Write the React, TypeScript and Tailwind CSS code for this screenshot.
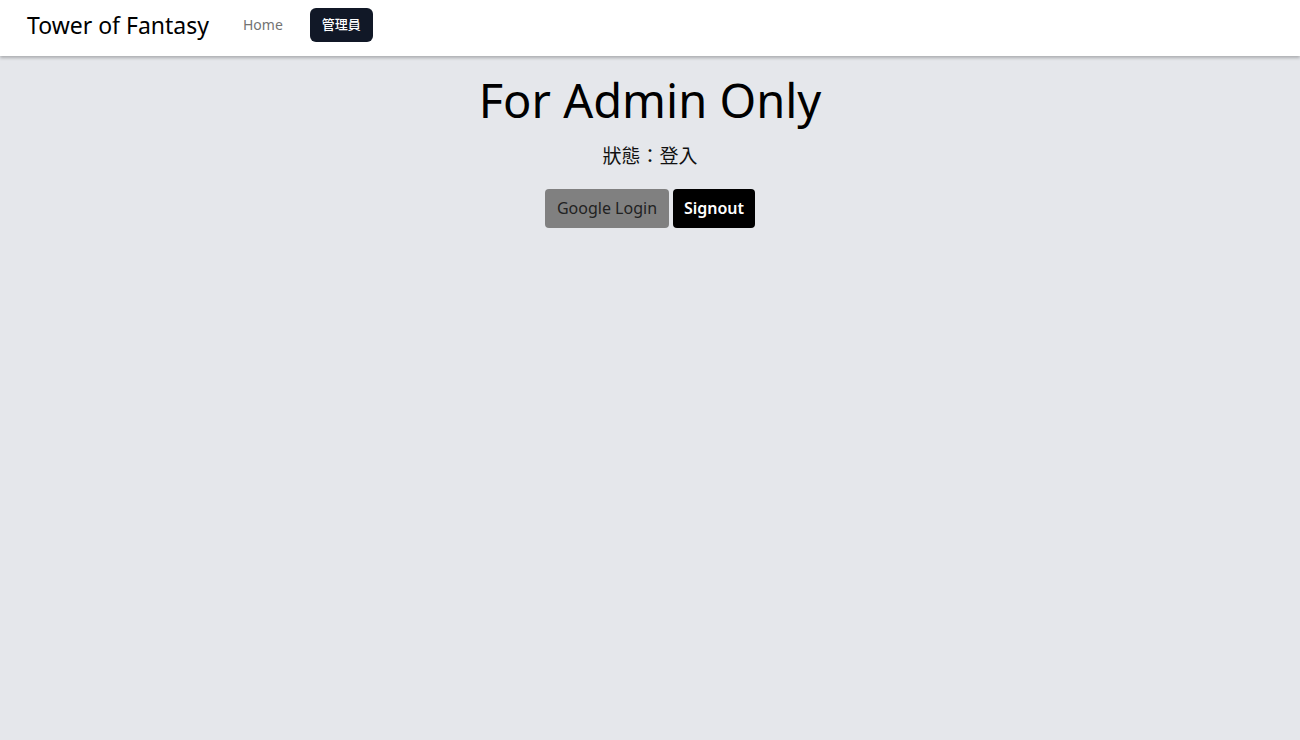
import React from "react";

export default function App() {
  return (
    <div
      className="min-h-screen bg-[#e5e7eb]"
      style={{ fontFamily: '"Noto Sans", "Noto Sans CJK TC", sans-serif' }}
    >
      <nav className="h-14 bg-white shadow-[0_2px_3px_rgba(0,0,0,0.25)] flex items-center pl-[27px] pb-[6px]">
        <span className="text-[23px] text-black">Tower of Fantasy</span>
        <span className="ml-[34px] text-sm text-[#737373]">Home</span>
        <span className="ml-[27px] h-[34px] w-[63px] bg-[#111827] rounded-md text-white text-[13px] font-medium flex items-center justify-center">
          管理員
        </span>
      </nav>
      <main className="flex flex-col items-center">
        <h1 className="text-[47px] leading-none mt-[21px] text-black">For Admin Only</h1>
        <p className="text-[19px] mt-[18px] text-[#111]">狀態：登入</p>
        <div className="flex gap-1 mt-[18px]">
          <button className="h-[39px] w-[124px] bg-[#808080] rounded text-[16px] text-[#222]">
            Google Login
          </button>
          <button className="h-[39px] w-[82px] bg-black rounded text-[16px] text-white font-semibold">
            Signout
          </button>
        </div>
      </main>
    </div>
  );
}
